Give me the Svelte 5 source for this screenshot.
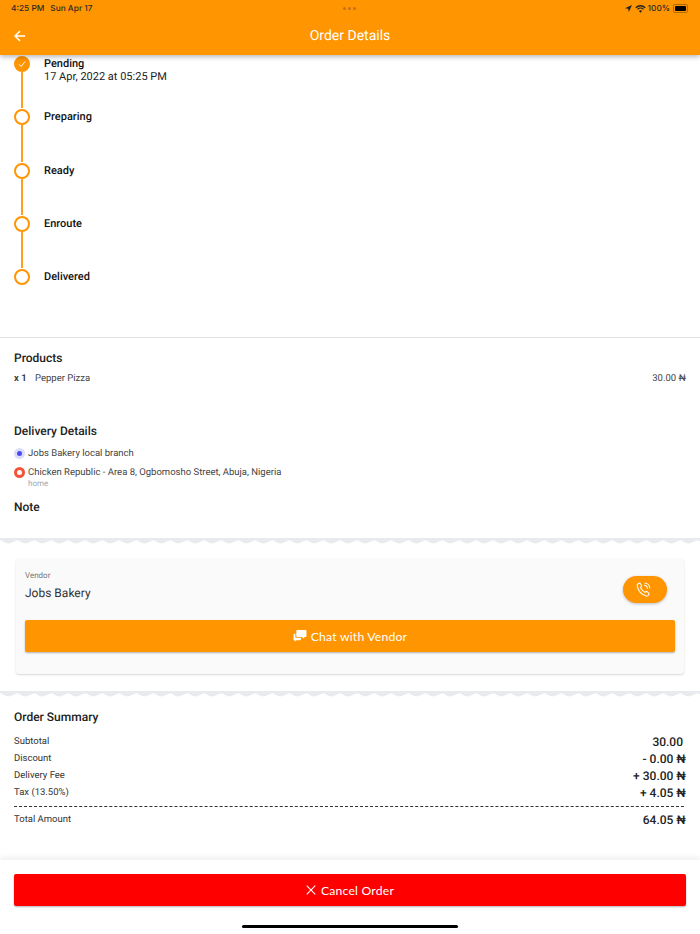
<script>
  const steps = [
    { name: "Pending", time: "17 Apr, 2022 at 05:25 PM", done: true },
    { name: "Preparing" },
    { name: "Ready" },
    { name: "Enroute" },
    { name: "Delivered", last: true }
  ];
  const summary = [
    { label: "Subtotal", value: "30.00", pad: true },
    { label: "Discount", value: "- 0.00 ₦" },
    { label: "Delivery Fee", value: "+ 30.00 ₦" },
    { label: "Tax (13.50%)", value: "+ 4.05 ₦" }
  ];
</script>

<div class="page">
  <header class="appbar">
    <div class="status">
      <span class="time">4:25 PM</span>
      <span class="date">Sun Apr 17</span>
      <span class="dots"><i></i><i></i><i></i></span>
      <span class="right">
        <svg width="7" height="7" viewBox="0 0 10 10"><path d="M10 0 0 4.600l4.600.8.8 4.600z" fill="#222" /></svg>
        <svg class="wifi" width="11" height="8" viewBox="0 0 16 12" fill="none" stroke="#222" stroke-width="2"><path d="M1 4a10 10 0 0 1 14 0M3.500 6.600a6.400 6.400 0 0 1 9 0" /><path d="M8 11.600 5.600 9a3.400 3.400 0 0 1 4.800 0z" fill="#222" stroke="none" /></svg>
        <span>100%</span>
        <span class="battery"><b></b></span>
      </span>
    </div>
    <div class="bar">
      <svg class="back" width="12" height="12" viewBox="0 0 14 14" fill="none" stroke="#fff" stroke-width="1.800"><path d="M13 7H1.500M7 1.200 1.200 7 7 12.800" /></svg>
      <h1>Order Details</h1>
    </div>
  </header>

  <section class="timeline">
    {#each steps as step}
      <div class="step">
        <div class="rail">
          <span class="dot" class:done={step.done}>
            {#if step.done}
              <svg width="8" height="8" viewBox="0 0 10 10" fill="none" stroke="#fff" stroke-width="1.200"><path d="M1.500 5.500 4 8l4.800-6" /></svg>
            {/if}
          </span>
          {#if !step.last}<span class="line"></span>{/if}
        </div>
        <div class="info">
          <strong>{step.name}</strong>
          {#if step.time}<span>{step.time}</span>{/if}
        </div>
      </div>
    {/each}
  </section>

  <section class="details">
    <h2>Products</h2>
    <div class="product">
      <b>x 1</b>
      <span class="pname">Pepper Pizza</span>
      <span class="price">30.00 ₦</span>
    </div>

    <h2 class="delivery">Delivery Details</h2>
    <div class="place first">
      <span class="pin blue"></span>
      <span>Jobs Bakery local branch</span>
    </div>
    <div class="place">
      <span class="pin red"></span>
      <span>Chicken Republic - Area 8, Ogbomosho Street, Abuja, Nigeria</span>
    </div>
    <div class="tag">home</div>
    <h2 class="note">Note</h2>
  </section>

  <svg class="wave" width="700" height="6">
    <defs>
      <pattern id="zig" width="17" height="6" patternUnits="userSpaceOnUse">
        <path d="M0 0h17v2.600q-1.500 0-3 .9t-5.500 2q-2.500 0-5.500-2t-3-.9z" fill="#e8eaee" />
      </pattern>
    </defs>
    <rect width="700" height="6" fill="url(#zig)" />
  </svg>

  <section class="vendor-wrap">
    <div class="vendor">
      <div class="vendor-top">
        <div>
          <div class="vlabel">Vendor</div>
          <div class="vname">Jobs Bakery</div>
        </div>
        <button type="button" class="call" aria-label="Call">
          <svg width="15" height="15" viewBox="0 0 16 16" fill="none" stroke="#fff" stroke-width="1.100" stroke-linejoin="round"><path d="M2.200 1.800 4.200 1l2 3.200-1.300 1.300c.6 2.300 2.300 4.400 4.800 5.600l1.300-1.200 3 2.300-.9 1.900c-.4.700-1.300 1-2.200.8C6.400 13.800 2.400 9.600 1.300 4.200c-.2-1 .2-2 .9-2.400z" /><path d="M8.600 3.400a3.800 3.800 0 0 1 3.600 3.700M9.200 1a6 6 0 0 1 5.600 5.700" /></svg>
        </button>
      </div>
      <button type="button" class="chat">
        <svg width="14" height="12" viewBox="0 0 14 13" fill="#fff"><path d="M4 0h9a1 1 0 0 1 1 1v5.500a1 1 0 0 1-1 1h-1.500v2L9 7.500H4a1 1 0 0 1-1-1V1a1 1 0 0 1 1-1z" /><path d="M1 4h1v3.500a1 1 0 0 0 1 1h5v1.500a1 1 0 0 1-1 1H3l-1.800 1.700V11H1a1 1 0 0 1-1-1V5a1 1 0 0 1 1-1z" /></svg>
        Chat with Vendor
      </button>
    </div>
  </section>

  <svg class="wave" width="700" height="6">
    <rect width="700" height="6" fill="url(#zig)" />
  </svg>

  <section class="summary">
    <h2>Order Summary</h2>
    <div class="rows">
      {#each summary as row}
        <div class="row">
          <span>{row.label}</span>
          <b class:pad={row.pad}>{row.value}</b>
        </div>
      {/each}
    </div>
    <div class="dash"></div>
    <div class="row total">
      <span>Total Amount</span>
      <b>64.05 ₦</b>
    </div>
  </section>

  <footer class="foot">
    <button type="button" class="cancel">
      <svg width="10" height="10" viewBox="0 0 11 11" stroke="#fff" stroke-width="1.200"><path d="M.8.800l9.400 9.400M10.200.800.800 10.200" /></svg>
      Cancel Order
    </button>
    <div class="home"></div>
  </footer>
</div>

<style>
  :global(body) { background: #fff; }
  .page {
    width: 700px;
    height: 934px;
    overflow: hidden;
    font-family: Roboto, "Liberation Sans", sans-serif;
    text-rendering: geometricPrecision;
    color: #111;
    display: flex;
    flex-direction: column;
    position: relative;
  }
  h1, h2 { margin: 0; font-weight: 500; }

  .appbar {
    height: 55px;
    flex: none;
    background: #ff9500;
    box-shadow: 0 2px 5px rgba(0, 0, 0, 0.28);
    position: relative;
    z-index: 2;
  }
  .status {
    height: 17px;
    display: flex;
    align-items: center;
    padding: 0 12px 0 11px;
    font-size: 8.300px;
    font-weight: 500;
    color: #2b2b2b;
    position: relative;
    font-family: Inter, Roboto, sans-serif;
  }
  .date { margin-left: 6px; }
  .dots { position: absolute; left: 343px; top: 7px; display: flex; gap: 2px; }
  .dots i { width: 3px; height: 3px; border-radius: 50%; background: #c8701a; }
  .right { margin-left: auto; display: flex; align-items: center; gap: 3px; }
  .wifi { margin-right: -1px; }
  .battery { border: 1px solid #b26a00; border-radius: 2px; padding: 1px; display: flex; box-sizing: content-box; width: 11px; height: 5px; }
  .battery b { flex: 1; background: #000; border-radius: 1px; }
  .bar { height: 38px; display: flex; align-items: center; justify-content: center; position: relative; }
  .back { position: absolute; left: 14px; top: 13px; }
  h1 { font-size: 14px; font-weight: 400; color: #fff; }

  .timeline { padding: 0 14px; height: 282px; flex: none; border-bottom: 1px solid #e2e2e2; }
  .step { height: 53.300px; display: flex; gap: 14px; }
  .rail { width: 16px; display: flex; flex-direction: column; align-items: center; padding-top: 1px; }
  .dot {
    width: 16px;
    height: 16px;
    flex: none;
    border: 2px solid #ff9500;
    border-radius: 50%;
    background: #fff;
    display: flex;
    align-items: center;
    justify-content: center;
    box-sizing: border-box;
  }
  .dot.done { background: #ff9500; }
  .line { flex: 1; width: 2px; background: #ff9f1c; }
  .info { display: flex; flex-direction: column; padding-top: 2px; font-size: 11px; line-height: 13px; }
  .info strong { font-weight: 500; }
  .info span { color: #222; font-size: 11px; }

  .details { padding: 13px 14px 0; height: 200px; flex: none; box-sizing: border-box; }
  h2 { font-size: 12px; line-height: 15px; color: #222; }
  .product { display: flex; align-items: center; margin-top: 6px; font-size: 9.500px; line-height: 14px; color: #444; }
  .product b { font-weight: 500; color: #222; width: 21px; }
  .price { margin-left: auto; }
  .delivery { margin-top: 38px; }
  .place { display: flex; align-items: center; gap: 3px; margin-top: 7px; font-size: 9.500px; line-height: 12px; color: #444; }
  .place.first { margin-top: 9px; }
  .pin { width: 11px; height: 11px; margin-top: -2px; border-radius: 50%; box-sizing: border-box; flex: none; }
  .pin.blue { background: #4a4af5; border: 3px solid #dcdcfb; }
  .pin.red { background: #fff; border: 3px solid #f4533a; }
  .tag { font-size: 8px; line-height: 9px; color: #a0a6b6; margin-left: 14px; }
  .note { margin-top: 12px; }

  .wave { display: block; flex: none; }

  .vendor-wrap { height: 147px; flex: none; box-sizing: border-box; padding: 15px 16px 0; }
  .vendor {
    height: 115px;
    box-sizing: border-box;
    background: #fafafa;
    border-radius: 3px;
    box-shadow: 0 1px 2px rgba(0, 0, 0, 0.16);
    padding: 12px 9px 0;
  }
  .vendor-top { display: flex; justify-content: space-between; }
  .vlabel { font-size: 8px; line-height: 10px; color: #777; }
  .vname { font-size: 12px; line-height: 14px; margin-top: 5px; color: #333; }
  .call {
    width: 44px;
    height: 27px;
    margin: 5px 8px 0 0;
    border: 0;
    border-radius: 14px;
    background: #ff9500;
    box-shadow: 0 1px 3px rgba(0, 0, 0, 0.25);
    display: flex;
    align-items: center;
    justify-content: center;
    padding: 0 3px 0 0;
  }
  button { font-family: Lato, Roboto, sans-serif; color: #fff; cursor: pointer; }
  .chat, .cancel {
    width: 100%;
    height: 32px;
    border: 0;
    border-radius: 2px;
    font-size: 12.200px;
    letter-spacing: 0.2px;
    display: flex;
    align-items: center;
    justify-content: center;
    gap: 4px;
    padding: 0;
    box-shadow: 0 1px 2px rgba(0, 0, 0, 0.3);
  }
  .chat { background: #ff9500; margin-top: 17px; }

  .summary { padding: 13px 14px 0; flex: 1; }
  .rows { margin-top: 8px; }
  .row { display: flex; justify-content: space-between; align-items: center; height: 17px; font-size: 9.500px; color: #333; }
  .row b { font-weight: 500; font-size: 12px; color: #222; }
  .row b.pad { padding-right: 3px; }
  .dash { border-top: 1px dashed #333; margin-top: 5px; width: 670px; }
  .total { margin-top: 4px; }

  .foot { height: 74px; flex: none; box-shadow: 0 -3px 5px rgba(0, 0, 0, 0.06); padding: 14px 14px 0; box-sizing: border-box; position: relative; background: #fff; }
  .cancel { background: #ff0000; gap: 5px; }
  .home { position: absolute; left: 242px; bottom: 6px; width: 216px; height: 3px; background: #000; border-radius: 2px; }
</style>
